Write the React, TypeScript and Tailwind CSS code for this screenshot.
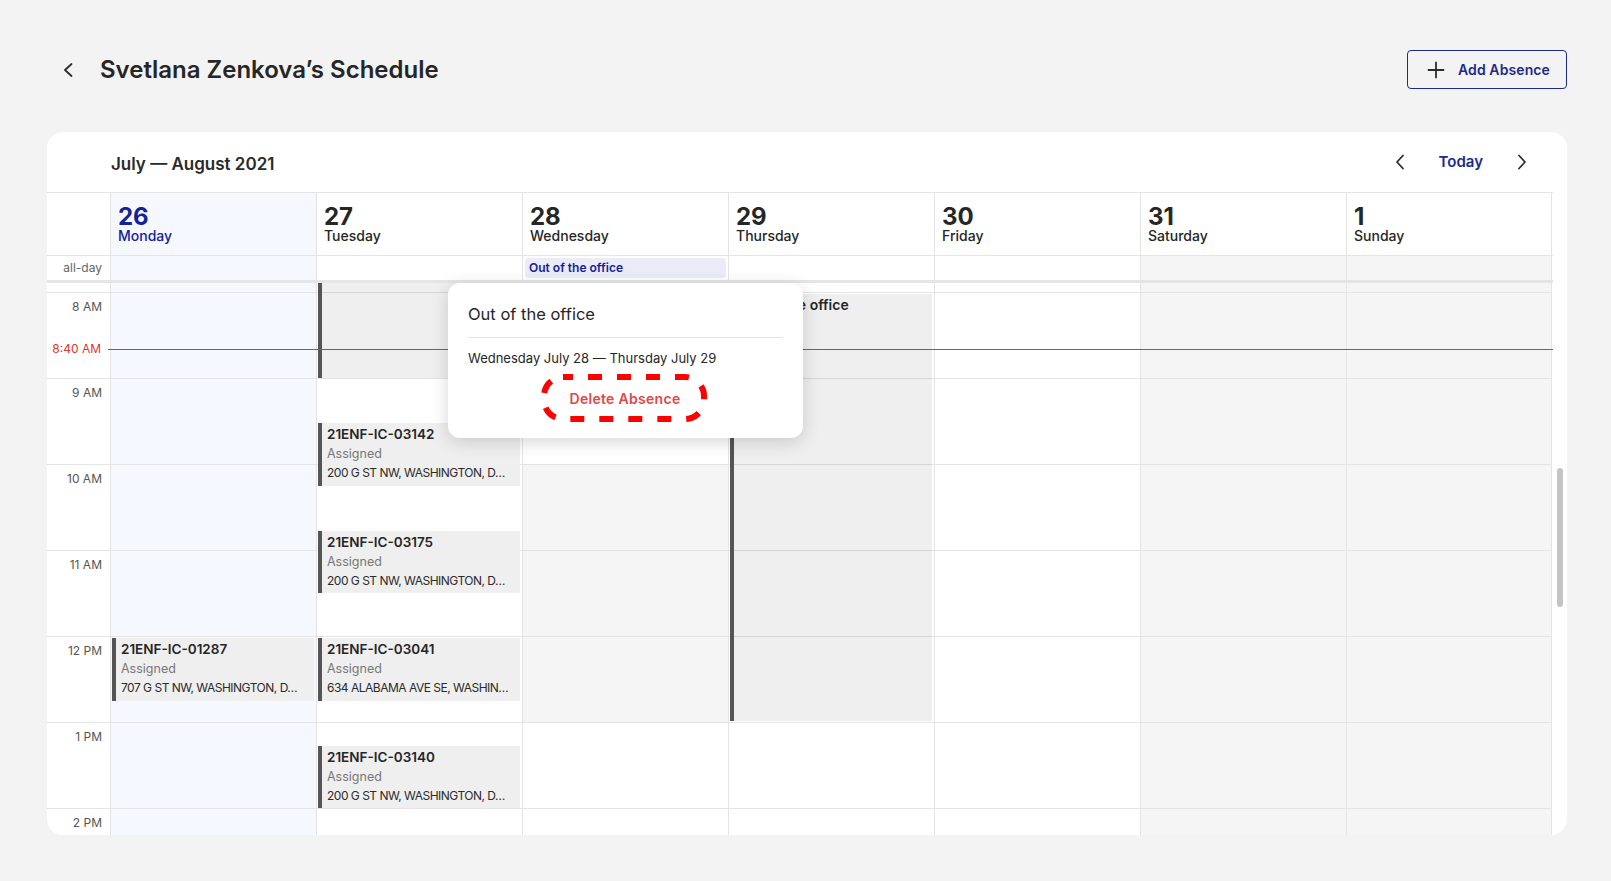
import React from "react";

type Day = { num: string; name: string; kind: "today" | "weekend" | "normal" };

const days: Day[] = [
  { num: "26", name: "Monday", kind: "today" },
  { num: "27", name: "Tuesday", kind: "normal" },
  { num: "28", name: "Wednesday", kind: "normal" },
  { num: "29", name: "Thursday", kind: "normal" },
  { num: "30", name: "Friday", kind: "normal" },
  { num: "31", name: "Saturday", kind: "weekend" },
  { num: "1", name: "Sunday", kind: "weekend" },
];

const hours = ["8 AM", "9 AM", "10 AM", "11 AM", "12 PM", "1 PM", "2 PM"];

type Ev = {
  day: number;
  pos: string;
  title?: string;
  status?: string;
  address?: string;
  absence?: boolean;
};

// positions are relative to the top of the scrolling body
const events: Ev[] = [
  { day: 1, pos: "top-[0px] h-[95px]", absence: true },
  { day: 3, pos: "top-[11px] h-[427px]", title: "Out of the office", absence: true },
  {
    day: 1,
    pos: "top-[140px] h-[63px]",
    title: "21ENF-IC-03142",
    status: "Assigned",
    address: "200 G ST NW, WASHINGTON, D…",
  },
  {
    day: 1,
    pos: "top-[248px] h-[62px]",
    title: "21ENF-IC-03175",
    status: "Assigned",
    address: "200 G ST NW, WASHINGTON, D…",
  },
  {
    day: 0,
    pos: "top-[355px] h-[63px]",
    title: "21ENF-IC-01287",
    status: "Assigned",
    address: "707 G ST NW, WASHINGTON, D…",
  },
  {
    day: 1,
    pos: "top-[355px] h-[63px]",
    title: "21ENF-IC-03041",
    status: "Assigned",
    address: "634 ALABAMA AVE SE, WASHIN…",
  },
  {
    day: 1,
    pos: "top-[463px] h-[62px]",
    title: "21ENF-IC-03140",
    status: "Assigned",
    address: "200 G ST NW, WASHINGTON, D…",
  },
];

const colBg = (d: Day) =>
  d.kind === "today" ? "bg-[#f5f8fe]" : d.kind === "weekend" ? "bg-[#f5f5f5]" : "bg-white";

const Chevron: React.FC<{ dir: "left" | "right"; className?: string }> = ({ dir, className }) => (
  <svg width="10" height="16" viewBox="0 0 10 16" fill="none" className={className}>
    <polyline
      points={dir === "left" ? "8,1.5 2,8 8,14.5" : "2,1.5 8,8 2,14.5"}
      stroke="#2b2b2b"
      strokeWidth="1.8"
      strokeLinecap="round"
      strokeLinejoin="round"
    />
  </svg>
);

const EventCard: React.FC<{ ev: Ev }> = ({ ev }) => (
  <div
    className={`absolute left-[1px] right-[2px] ${ev.pos} ${
      ev.absence ? "bg-black/[0.063]" : "bg-[#efefef]"
    } border-l-4 border-[#555555] pl-[5px] pt-[1px] overflow-hidden`}
  >
    {ev.title && (
      <div
        className={`${
          ev.absence ? "text-[14px]" : "text-[13.5px]"
        } leading-[20px] font-semibold text-[#262626] whitespace-nowrap`}
      >
        {ev.title}
      </div>
    )}
    {ev.status && (
      <div className="text-[12.5px] leading-[19px] text-[#777777] whitespace-nowrap">{ev.status}</div>
    )}
    {ev.address && (
      <div className="text-[12px] leading-[20px] text-[#2b2b2b] whitespace-nowrap overflow-hidden tracking-[-0.5px]">
        {ev.address}
      </div>
    )}
  </div>
);

const App: React.FC = () => {
  return (
    <div
      className="relative w-[1611px] h-[881px] bg-[#f3f3f3] overflow-hidden"
      style={{ fontFamily: "Inter, 'Noto Sans', sans-serif" }}
    >
      {/* page header */}
      <div className="flex items-center justify-between pt-[50px] pl-[63px] pr-[44px]">
        <div className="flex items-center">
          <svg width="10" height="14" viewBox="0 0 10 14" fill="none">
            <polyline
              points="8.5,1 2,7 8.5,13"
              stroke="#2b2b2b"
              strokeWidth="1.8"
              strokeLinecap="round"
              strokeLinejoin="round"
            />
          </svg>
          <h1 className="ml-[27px] text-[24px] leading-[30px] font-semibold text-[#262626]">
            Svetlana Zenkova’s Schedule
          </h1>
        </div>
        <button className="w-[160px] h-[39px] flex items-center pl-[19px] gap-[13px] border border-[#1c2a8c] rounded-[4px] bg-transparent">
          <svg width="18" height="18" viewBox="0 0 18 18" fill="none">
            <path d="M9 1.5v15M1.5 9h15" stroke="#2b2b2b" strokeWidth="1.8" strokeLinecap="round" />
          </svg>
          <span className="text-[14px] font-semibold text-[#1c2a8c] tracking-[0.1px]">Add Absence</span>
        </button>
      </div>

      {/* calendar card */}
      <div className="relative mt-[43px] ml-[47px] w-[1520px] h-[703px] bg-white rounded-[16px] overflow-hidden flex flex-col">
        <div className="h-[60px] shrink-0 flex items-center justify-between pl-[64px] pr-[40px]">
          <div className="mt-[3px] text-[17px] leading-[24px] font-semibold text-[#2a2a2a]">
            July — August 2021
          </div>
          <div className="flex items-center gap-[34px]">
            <Chevron dir="left" />
            <span className="text-[15px] font-semibold text-[#1c2a8c]">Today</span>
            <Chevron dir="right" />
          </div>
        </div>

        <div className="flex flex-1 min-h-0">
          <div className="w-[1506px] flex flex-col border-t border-[#e4e4e4]">
            {/* day header */}
            <div className="flex h-[62px] shrink-0">
              <div className="w-[63px] shrink-0" />
              {days.map((d, i) => (
                <div
                  key={d.num}
                  className={`w-[206px] shrink-0 border-l border-[#e4e4e4] pl-[7px] pt-[12px] ${
                    d.kind === "today" ? "bg-[#f5f8fe] text-[#14219b]" : "bg-white text-[#262626]"
                  } ${i === 6 ? "border-r" : ""}`}
                >
                  <div className="text-[24px] leading-[24px] font-bold">{d.num}</div>
                  <div className="text-[14px] leading-[14px] font-medium">{d.name}</div>
                </div>
              ))}
            </div>

            {/* all-day row */}
            <div className="flex h-[25px] shrink-0 border-t border-[#e4e4e4]">
              <div className="w-[63px] shrink-0 flex items-center justify-end pr-[8px] text-[12px] text-[#666666]">
                all-day
              </div>
              {days.map((d, i) => (
                <div
                  key={d.num}
                  className={`w-[206px] shrink-0 border-l border-[#e4e4e4] ${colBg(d)} ${
                    i === 6 ? "border-r" : ""
                  } flex items-center px-[2px]`}
                >
                  {i === 2 && (
                    <div className="w-full h-[20px] rounded-[4px] bg-[#ebecf7] pl-[4px] flex items-center text-[12px] font-semibold text-[#14219b]">
                      Out of the office
                    </div>
                  )}
                </div>
              ))}
            </div>
            <div className="h-[3px] shrink-0 bg-[#e5e5e5]" />

            {/* time grid body */}
            <div className="relative flex flex-1 min-h-0 overflow-hidden">
              <div className="w-[63px] shrink-0 flex flex-col">
                <div className="h-[9px] shrink-0" />
                {hours.map((h, i) => (
                  <div
                    key={h}
                    className={`${
                      i === hours.length - 1 ? "flex-1" : "h-[86px]"
                    } shrink-0 border-t border-[#e4e4e4] text-right pr-[8px] pt-[6px] text-[12px] leading-[16px] text-[#555555]`}
                  >
                    {h}
                  </div>
                ))}
              </div>
              {days.map((d, di) => (
                <div
                  key={d.num}
                  className={`relative w-[206px] shrink-0 flex flex-col border-l border-[#e4e4e4] ${colBg(d)} ${
                    di === 6 ? "border-r" : ""
                  }`}
                >
                  <div className="h-[9px] shrink-0" />
                  {hours.map((h, i) => (
                    <div
                      key={h}
                      className={`${i === hours.length - 1 ? "flex-1" : "h-[86px]"} shrink-0 border-t border-[#e4e4e4] ${
                        di === 2 && i >= 2 && i <= 4 ? "bg-[#f5f5f5]" : ""
                      }`}
                    />
                  ))}
                  {events
                    .filter((e) => e.day === di)
                    .map((e, k) => (
                      <EventCard key={k} ev={e} />
                    ))}
                </div>
              ))}

              {/* now indicator */}
              <div className="absolute left-0 w-[63px] top-[58px] h-[16px] pr-[9px] text-right text-[12px] leading-[16px] text-[#e0352b]">
                8:40 AM
              </div>
              <div className="absolute left-[61px] right-0 top-[66px] h-px bg-[#e0352b]" />
            </div>
          </div>
          <div className="flex-1" />
        </div>

        {/* scrollbar thumb */}
        <div className="absolute left-[1510px] top-[336px] w-[6px] h-[139px] rounded-full bg-[#c4c4c4]" />
      </div>

      {/* event popover */}
      <div className="absolute left-[448px] top-[283px] w-[355px] h-[155px] bg-white rounded-[12px] shadow-[0_4px_18px_rgba(0,0,0,0.16)] px-[20px] pt-[19px]">
        <div className="text-[16.5px] leading-[24px] font-normal text-[#262626] pb-[11px] border-b border-[#e4e4e4]">
          Out of the office
        </div>
        <div className="pt-[10px] text-[13px] leading-[20px] text-[#262626]">
          Wednesday July 28 — Thursday July 29
        </div>
        <div className="relative flex justify-center mt-[21px] -ml-[20px] pl-[19px]">
          <span className="text-[14px] leading-[20px] font-semibold text-[#e04848] tracking-[0.3px]">
            Delete Absence
          </span>
        </div>
        <svg
          className="absolute left-[93px] top-[91px]"
          width="166"
          height="49"
          viewBox="0 0 166 49"
          fill="none"
        >
          <rect
            x="3"
            y="3"
            width="160"
            height="42"
            rx="19"
            stroke="#ff0000"
            strokeWidth="6"
            strokeDasharray="14 15"
            strokeDashoffset="4"
          />
        </svg>
      </div>
    </div>
  );
};

export default App;
